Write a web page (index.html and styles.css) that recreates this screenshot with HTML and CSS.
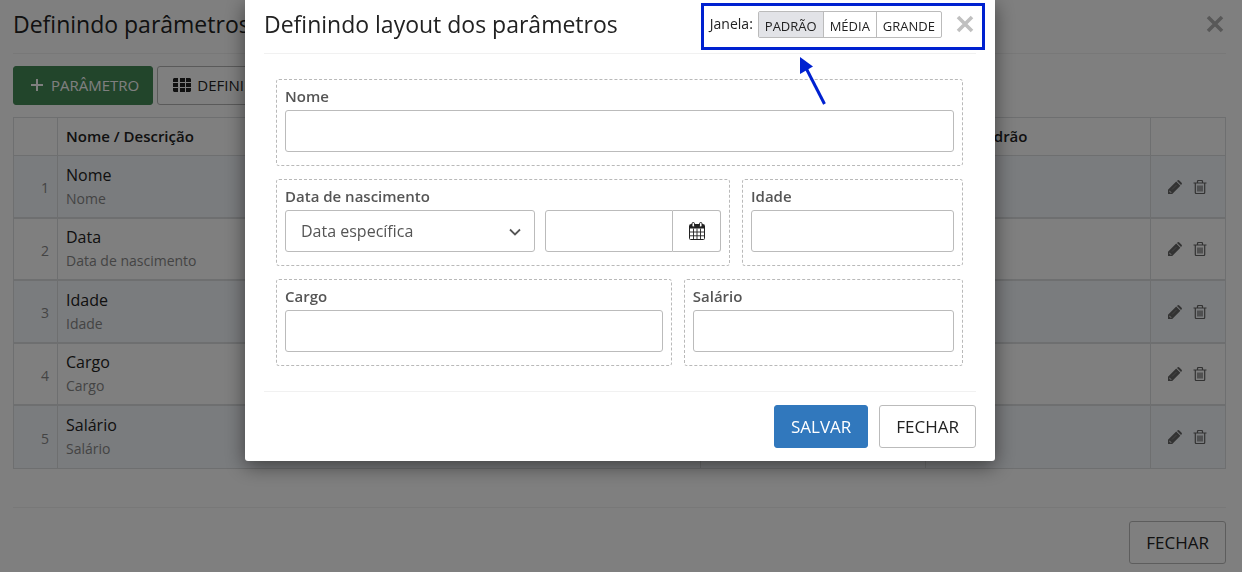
FILE: index.html
```html
<!DOCTYPE html>
<html lang="pt-BR">
<head>
<meta charset="utf-8">
<meta name="viewport" content="width=device-width, initial-scale=1">
<title>Definindo layout dos parâmetros</title>
<link rel="stylesheet" href="styles.css">
</head>
<body>
<svg class="sprite" aria-hidden="true">
  <symbol id="i-close" viewBox="0 0 18 18"><path d="M2 2l14 14M16 2L2 16" fill="none" stroke="currentColor" stroke-width="3.600"/></symbol>
  <symbol id="i-plus" viewBox="0 0 14 14"><path d="M7 1v12M1 7h12" fill="none" stroke="currentColor" stroke-width="2"/></symbol>
  <symbol id="i-grid" viewBox="0 0 18 14"><path d="M1 0h4v4H0V1zM7 0h5v4H7zM13 0h4l1 1v3h-5zM0 5h5v4H0zM7 5h5v4H7zM13 5h5v4h-5zM0 10h5v4H1l-1-1zM7 10h5v4H7zM13 10h5v3l-1 1h-4z" fill="currentColor"/></symbol>
  <symbol id="i-pencil" viewBox="0 0 14 14"><path d="M0 14V9.800L8.200 1.600l4.200 4.200L4.200 14zM9 .9l.7-.6q.8-.6 1.600.1l2.300 2.300q.7.800.1 1.600l-.7.7z" fill="currentColor"/><path d="M1.300 10.800l2 2" stroke="#fff" stroke-opacity=".6" stroke-width="1.200"/><path d="M4 9.500l4.500-4.500" stroke="#fff" stroke-opacity=".25"/></symbol>
  <symbol id="i-trash" viewBox="0 0 14 14"><path d="M.5 3h13M4.500 3V1.500q0-1 1-1h3q1 0 1 1V3M2.300 3.500v9q0 1 1 1h7.400q1 0 1-1v-9M5 5.500v6M7 5.500v6M9 5.500v6" fill="none" stroke="currentColor" stroke-width="1.200"/></symbol>
  <symbol id="i-chevron" viewBox="0 0 12 8"><path d="M1 1.500l5 5 5-5" fill="none" stroke="currentColor" stroke-width="1.800"/></symbol>
  <symbol id="i-calendar" viewBox="0 0 16 18"><path d="M1.500 2.500h13q1 0 1 1v13q0 1-1 1h-13q-1 0-1-1v-13q0-1 1-1z" fill="#fff" stroke="currentColor"/><path d="M1 3h14v3.500H1z" fill="currentColor"/><path d="M4.500 6.500v11M8 6.500v11M11.500 6.500v11M1 10h14M1 13.800h14" stroke="currentColor" stroke-width=".9" fill="none"/><rect x="3" y=".5" width="2.500" height="4.500" rx="1.200" fill="#fff" stroke="currentColor"/><rect x="10.500" y=".5" width="2.500" height="4.500" rx="1.200" fill="#fff" stroke="currentColor"/></symbol>
</svg>

<main class="page">
  <header class="page-head">
    <h1 class="title">Definindo parâmetros</h1>
    <button class="close close-page" type="button" aria-label="Fechar"><svg class="ic-close"><use href="#i-close"/></svg></button>
  </header>
  <div class="toolbar">
    <button class="tool tool-add" type="button"><svg class="ic-plus"><use href="#i-plus"/></svg>PARÂMETRO</button>
    <button class="tool" type="button"><svg class="ic-grid"><use href="#i-grid"/></svg>DEFINIR</button>
  </div>
  <table class="params">
    <colgroup><col class="c-num"><col><col class="c-mid"><col class="c-mid"><col class="c-act"></colgroup>
    <thead>
      <tr><th></th><th scope="col">Nome / Descrição</th><th></th><th scope="col">Valor padrão</th><th></th></tr>
    </thead>
    <tbody>
      <tr><td class="num">1</td><td><div class="name">Nome</div><div class="desc">Nome</div></td><td></td><td></td><td><div class="acts"><button class="act" type="button" aria-label="Editar"><svg class="ic-act"><use href="#i-pencil"/></svg></button><button class="act" type="button" aria-label="Excluir"><svg class="ic-act"><use href="#i-trash"/></svg></button></div></td></tr>
      <tr><td class="num">2</td><td><div class="name">Data</div><div class="desc">Data de nascimento</div></td><td></td><td></td><td><div class="acts"><button class="act" type="button" aria-label="Editar"><svg class="ic-act"><use href="#i-pencil"/></svg></button><button class="act" type="button" aria-label="Excluir"><svg class="ic-act"><use href="#i-trash"/></svg></button></div></td></tr>
      <tr><td class="num">3</td><td><div class="name">Idade</div><div class="desc">Idade</div></td><td></td><td></td><td><div class="acts"><button class="act" type="button" aria-label="Editar"><svg class="ic-act"><use href="#i-pencil"/></svg></button><button class="act" type="button" aria-label="Excluir"><svg class="ic-act"><use href="#i-trash"/></svg></button></div></td></tr>
      <tr><td class="num">4</td><td><div class="name">Cargo</div><div class="desc">Cargo</div></td><td></td><td></td><td><div class="acts"><button class="act" type="button" aria-label="Editar"><svg class="ic-act"><use href="#i-pencil"/></svg></button><button class="act" type="button" aria-label="Excluir"><svg class="ic-act"><use href="#i-trash"/></svg></button></div></td></tr>
      <tr><td class="num">5</td><td><div class="name">Salário</div><div class="desc">Salário</div></td><td></td><td></td><td><div class="acts"><button class="act" type="button" aria-label="Editar"><svg class="ic-act"><use href="#i-pencil"/></svg></button><button class="act" type="button" aria-label="Excluir"><svg class="ic-act"><use href="#i-trash"/></svg></button></div></td></tr>
    </tbody>
  </table>
  <footer class="page-foot"><button class="btn" type="button">FECHAR</button></footer>
</main>

<div class="overlay">
  <section class="modal" role="dialog" aria-modal="true" aria-labelledby="modal-title">
    <header class="modal-head">
      <h2 class="title" id="modal-title">Definindo layout dos parâmetros</h2>
      <span class="size-label" id="size-label">Janela:</span>
      <div class="sizes" role="group" aria-labelledby="size-label">
        <button class="size size-on" type="button" aria-pressed="true">PADRÃO</button>
        <button class="size" type="button" aria-pressed="false">MÉDIA</button>
        <button class="size" type="button" aria-pressed="false">GRANDE</button>
      </div>
      <button class="close" type="button" aria-label="Fechar"><svg class="ic-close"><use href="#i-close"/></svg></button>
    </header>
    <form class="grid">
      <div class="field w12"><label class="label" for="nome">Nome</label><input class="input" id="nome" type="text"></div>
      <div class="field w8">
        <label class="label" for="tipo">Data de nascimento</label>
        <div class="date-row">
          <div class="select-wrap">
            <select class="input select" id="tipo"><option>Data específica</option></select>
            <svg class="ic-chevron"><use href="#i-chevron"/></svg>
          </div>
          <div class="date">
            <input class="input date-input" type="text" aria-label="Data">
            <button class="date-btn" type="button" aria-label="Abrir calendário"><svg class="ic-cal"><use href="#i-calendar"/></svg></button>
          </div>
        </div>
      </div>
      <div class="field w4"><label class="label" for="idade">Idade</label><input class="input" id="idade" type="text"></div>
      <div class="field w7"><label class="label" for="cargo">Cargo</label><input class="input" id="cargo" type="text"></div>
      <div class="field w5"><label class="label" for="salario">Salário</label><input class="input" id="salario" type="text"></div>
    </form>
    <footer class="modal-foot">
      <button class="btn btn-primary" type="button">SALVAR</button>
      <button class="btn" type="button">FECHAR</button>
    </footer>
    <div class="mark"></div>
    <svg class="arrow" viewBox="0 0 28 48" aria-hidden="true"><path d="M25.500 47L7 11" stroke="#0021d0" stroke-width="3"/><path d="M1 0v17L14 9.500z" fill="#0021d0"/></svg>
  </section>
</div>
</body>
</html>
```
FILE: styles.css
```css
* { box-sizing: border-box; }
body {
  margin: 0;
  background: #fff;
  color: #222;
  font-family: "Open Sans", "Noto Sans", sans-serif;
  font-size: 15px;
}
button, input, select { font: inherit; color: inherit; margin: 0; }
button { padding: 0; border: 0; background: none; cursor: pointer; }
svg { display: block; }
.sprite { display: none; }

.page { padding: 0 16px 8px 13px; }
.page-head {
  display: flex;
  justify-content: space-between;
  align-items: center;
  height: 54px;
  padding-bottom: 6px;
  border-bottom: 1px solid #f1f1f1;
}
.title { margin: 0; font-size: 23px; line-height: 32px; font-weight: 400; }
.close { color: #c0c0c0; }
.close-page { padding-right: 2px; color: #b0b0b0; }
.ic-close { width: 18px; height: 18px; }

.toolbar { display: flex; gap: 4px; padding: 12px 0; }
.tool {
  display: flex;
  align-items: center;
  height: 39px;
  padding: 0 13px 2px 15px;
  border: 1px solid #b4b4b4;
  border-radius: 3px;
  gap: 6px;
}
.tool-add { gap: 7px; padding-left: 16px; border-color: #448a57; background: #448a57; color: #fff; }
.ic-plus { width: 14px; height: 14px; }
.ic-grid { width: 18px; height: 14px; }

.params {
  width: 100%;
  table-layout: fixed;
  border-spacing: 0;
  border: 1px solid #dcdee0;
  border-width: 1px 0 0 1px;
}
.c-num { width: 44px; }
.c-mid { width: 225px; }
.c-act { width: 75px; }
.params th, .params td {
  padding: 0 8px;
  border: 1px solid #dcdee0;
  border-width: 0 1px 1px 0;
  text-align: left;
}
.params th { height: 38px; padding-bottom: 2px; font-weight: 600; }
.params td { height: 62px; border-bottom-width: 2px; }
.params tr:nth-child(odd) td { height: 63px; background: #f5f8fc; }
.params tr:last-child td { border-bottom-width: 1px; }
.params .num { font-size: 14px; text-align: right; color: #888; padding-top: 2px; }
.name { font-size: 16px; line-height: 24px; }
.desc { font-size: 14px; line-height: 24px; color: #888; }
.acts { display: flex; gap: 11px; padding-left: 9px; }
.act { color: #666; }
.ic-act { width: 14px; height: 14px; }

.page-foot {
  display: flex;
  justify-content: flex-end;
  margin-top: 38px;
  padding-top: 13px;
  border-top: 1px solid #f1f1f1;
}
.btn {
  height: 43px;
  padding: 0 16px 1px;
  border: 1px solid #bbb;
  border-radius: 3px;
  background: #fff;
  font-size: 17px;
}
.btn-primary { border-color: #3178bd; background: #3178bd; color: #fff; }

.overlay {
  position: fixed;
  inset: 0;
  display: flex;
  justify-content: center;
  align-items: flex-start;
  padding-right: 2px;
  background: rgba(0, 0, 0, .5);
}
.modal {
  position: relative;
  width: 100%;
  max-width: 750px;
  padding: 0 19px 13px;
  border-radius: 0 0 3px 3px;
  background: #fff;
  box-shadow: 0 5px 20px rgba(0, 0, 0, .5);
}
.modal-head {
  display: flex;
  align-items: center;
  height: 54px;
  padding: 0 2px 6px 0;
  border-bottom: 1px solid #f1f1f1;
}
.size-label { margin-left: auto; font-size: 14px; }
.sizes {
  display: flex;
  margin: 1px 14px 0 5px;
  border: 1px solid #bbb;
  border-radius: 2px;
}
.size { height: 25px; padding: 3px 6px 0; font-size: 13px; }
.size + .size { border-left: 1px solid #bbb; }
.size-on { background: #e2e3e7; }

.grid {
  display: grid;
  grid-template-columns: repeat(12, 1fr);
  gap: 13px 12px;
  padding: 25px 13px 25px 12px;
}
.w12 { grid-column: span 12; }
.w8 { grid-column: span 8; }
.w7 { grid-column: span 7; }
.w5 { grid-column: span 5; }
.w4 { grid-column: span 4; }
.field {
  min-width: 0;
  padding: 4px 8px 13px;
  border: 1px dashed #b9b9b9;
  border-radius: 3px;
}
.label { display: block; padding-bottom: 2px; line-height: 24px; font-weight: 600; color: #555; }
.input {
  display: block;
  width: 100%;
  height: 42px;
  padding: 0 15px;
  border: 1px solid #bbb;
  border-radius: 3px;
  background: #fff;
  color: #555;
  font-size: 16px;
}
.date-row { display: flex; gap: 10px; }
.select-wrap { position: relative; flex: 1; }
.select { appearance: none; }
.ic-chevron {
  position: absolute;
  top: 18px;
  right: 14px;
  width: 12px;
  height: 8px;
  color: #555;
  pointer-events: none;
}
.date { display: flex; width: 176px; }
.date-input { flex: 1; min-width: 0; border-radius: 3px 0 0 3px; }
.date-btn {
  display: grid;
  place-items: center;
  width: 48px;
  border: 1px solid #bbb;
  border-left: 0;
  border-radius: 0 3px 3px 0;
}
.ic-cal { width: 16px; height: 18px; }
.modal-foot {
  display: flex;
  justify-content: flex-end;
  gap: 11px;
  padding-top: 13px;
  border-top: 1px solid #f1f1f1;
}

/* Highlight over the window size switch */
.mark {
  position: absolute;
  top: 3px;
  right: 10px;
  width: 284px;
  height: 47px;
  border: 3px solid #0021d0;
  pointer-events: none;
}
.arrow { position: absolute; top: 57px; right: 168px; width: 28px; height: 48px; }
```
